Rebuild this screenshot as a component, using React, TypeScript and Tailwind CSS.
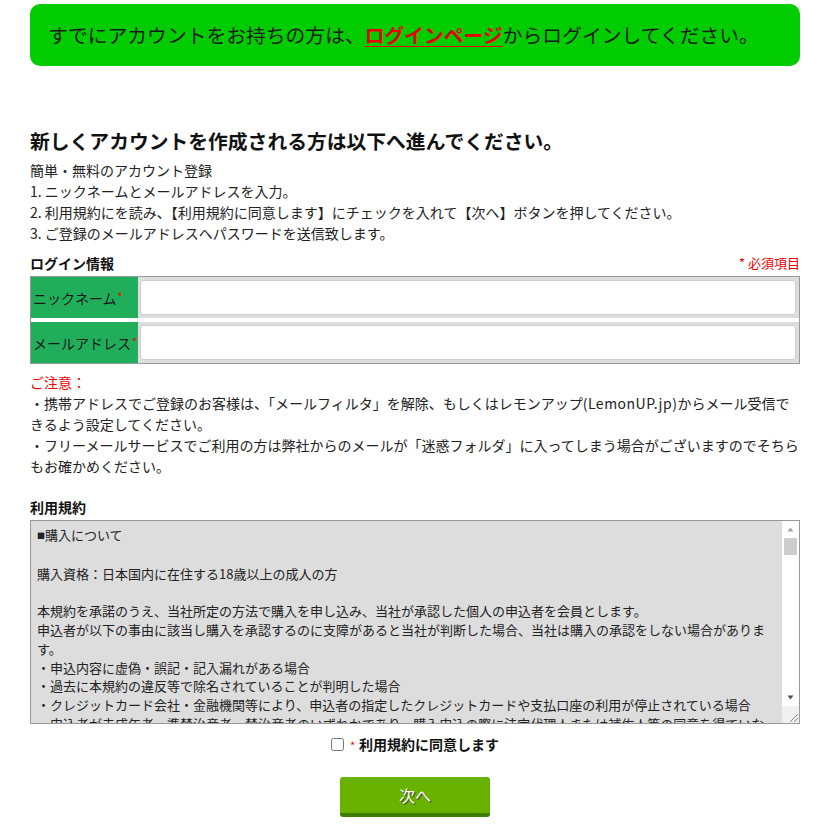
import { useState } from 'react'

const font = { fontFamily: '"Noto Sans CJK JP", "Noto Sans", sans-serif' }

const terms = [
  ['sq', '購入について'],
  [''],
  ['購入資格：日本国内に在住する18歳以上の成人の方'],
  [''],
  ['本規約を承諾のうえ、当社所定の方法で購入を申し込み、当社が承認した個人の申込者を会員とします。'],
  ['申込者が以下の事由に該当し購入を承認するのに支障があると当社が判断した場合、当社は購入の承認をしない場合があります。'],
  ['・申込内容に虚偽・誤記・記入漏れがある場合'],
  ['・過去に本規約の違反等で除名されていることが判明した場合'],
  ['・クレジットカード会社・金融機関等により、申込者の指定したクレジットカードや支払口座の利用が停止されている場合'],
  ['・申込者が未成年者、準禁治産者、禁治産者のいずれかであり、購入申込の際に法定代理人または補佐人等の同意を得ていなかった場合'],
  ['・その他、当社が不適当と判断した場合'],
]

function FieldRow({ label, last }: { label: string; last?: boolean }) {
  const [value, setValue] = useState('')
  return (
    <div className={`flex ${last ? '' : 'border-b-[4px] border-white'}`}>
      <div className="w-[107px] bg-[#21ae5b] flex items-center pl-[2px] text-[14px] text-[#1a1a1a] leading-5">
        {label}
        <span className="text-[#e00] text-[11px] ml-[1px] -mt-[4px]">*</span>
      </div>
      <div className="flex-1 bg-[#dddddd] p-[3px] pl-[2px]">
        <input
          type="text"
          value={value}
          onChange={(e) => setValue(e.target.value)}
          className="w-full h-[35px] bg-white rounded-[3px] border border-[#cfcfcf] px-2 text-[14px] outline-none"
        />
      </div>
    </div>
  )
}

// Drawn classic scrollbar next to the terms box
function ScrollBar() {
  return (
    <div className="w-[17px] bg-white flex flex-col items-center shrink-0">
      <svg width="17" height="17" viewBox="0 0 17 17" className="shrink-0">
        <path d="M5.5 10.5 L8.5 6.5 L11.5 10.5 Z" fill="#a3a3a3" />
      </svg>
      <div className="w-[13px] h-[17px] bg-[#cdcdcd]" />
      <div className="flex-1" />
      <svg width="17" height="17" viewBox="0 0 17 17" className="shrink-0">
        <path d="M5.5 6.5 L11.5 6.5 L8.5 10.5 Z" fill="#505050" />
      </svg>
      <div className="w-[17px] h-[17px] bg-[#f0f0f0] flex items-end justify-end shrink-0">
        <svg width="12" height="12" viewBox="0 0 12 12">
          <path d="M11 3 L3 11 M11 7 L7 11" stroke="#8a8a8a" strokeWidth="1" />
        </svg>
      </div>
    </div>
  )
}

export default function App() {
  const [agree, setAgree] = useState(false)

  return (
    <div className="bg-white min-h-[837px] pt-[4px] text-[#222]" style={font}>
      <div className="ml-[30px] w-[770px]">
        {/* Login banner */}
        <div className="h-[62px] bg-[#00cc00] rounded-[10px] flex items-center pl-[18px] text-[19.8px] text-[#1a1a1a] leading-7">
          すでにアカウントをお持ちの方は、
          <a href="#" className="text-[#e60000] font-bold underline underline-offset-[3px]">
            ログインページ
          </a>
          からログインしてください。
        </div>

        <h2 className="mt-[61px] text-[19.8px] font-bold leading-7 text-[#111]">
          新しくアカウントを作成される方は以下へ進んでください。
        </h2>

        <div className="mt-[5px] text-[14px] leading-[21px]">
          <p>簡単・無料のアカウント登録</p>
          <p>1. ニックネームとメールアドレスを入力。</p>
          <p>2. 利用規約にを読み、【利用規約に同意します】にチェックを入れて【次へ】ボタンを押してください。</p>
          <p>3. ご登録のメールアドレスへパスワードを送信致します。</p>
        </div>

        {/* Login info */}
        <div className="mt-[9px] flex items-end justify-between leading-5">
          <span className="text-[14px] font-bold text-[#111]">ログイン情報</span>
          <span className="text-[13px] text-[#e00]">* 必須項目</span>
        </div>
        <div className="mt-[3px] border border-[#999]">
          <FieldRow label="ニックネーム" />
          <FieldRow label="メールアドレス" last />
        </div>

        {/* Notice */}
        <div className="mt-[8px] text-[14px] leading-[21px]">
          <p className="text-[#e00]">ご注意：</p>
          <p>
            ・携帯アドレスでご登録のお客様は、「メールフィルタ」を解除、もしくはレモンアップ
            <span className="tracking-[0.5px]">(LemonUP.jp)</span>
            からメール受信できるよう設定してください。
          </p>
          <p>・フリーメールサービスでご利用の方は弊社からのメールが「迷惑フォルダ」に入ってしまう場合がございますのでそちらもお確かめください。</p>
        </div>

        {/* Terms */}
        <p className="mt-[20px] text-[14px] font-bold leading-5 text-[#111]">利用規約</p>
        <div className="mt-[3px] h-[204px] border border-[#999] flex">
          <div className="flex-1 bg-[#dddddd] overflow-hidden pt-[5px] px-[6px] text-[13px] leading-[18.8px] text-[#222]">
            {terms.map((t, i) =>
              t[0] === 'sq' ? (
                <p key={i}>
                  <span className="text-[8px] align-middle">■</span>
                  {t[1]}
                </p>
              ) : (
                <p key={i} className="min-h-[18.8px]">{t[0]}</p>
              )
            )}
          </div>
          <ScrollBar />
        </div>

        <div className="mt-[10px] flex items-center justify-center text-[14px] font-bold leading-5 text-[#111]">
          <input
            id="agree"
            type="checkbox"
            checked={agree}
            onChange={(e) => setAgree(e.target.checked)}
            className="w-[13px] h-[13px] mr-[6px]"
          />
          <label htmlFor="agree">
            <span className="text-[#e00] text-[11px] font-normal mr-[4px]">*</span>
            利用規約に同意します
          </label>
        </div>

        <div className="mt-[22px] flex justify-center">
          <button className="w-[150px] h-[40px] bg-[#69b300] border-b-[4px] border-[#3f7d00] rounded-[3px] text-white text-[16px] [text-shadow:1px_1px_1px_#333]">
            次へ
          </button>
        </div>
      </div>
    </div>
  )
}
